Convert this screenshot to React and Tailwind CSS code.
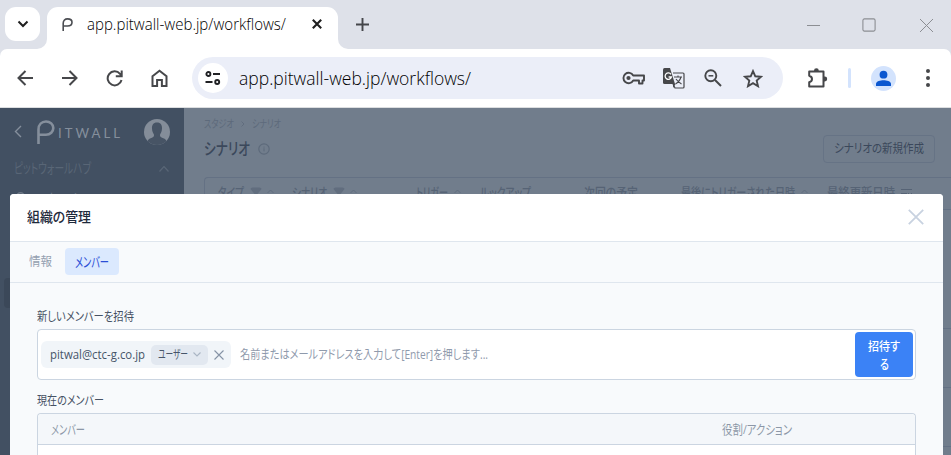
import React, { useLayoutEffect, useRef } from "react";

const JP = "font-['Open_Sans','Noto_Sans_CJK_JP',sans-serif] [font-feature-settings:'palt']";

// Text condensed or widened horizontally to a given width.
function Fit({ w, className = "", children }) {
  const ref = useRef(null);
  useLayoutEffect(() => {
    const el = ref.current;
    const natural = el.getBoundingClientRect().width;
    if (natural) el.style.transform = `scaleX(${w / natural})`;
  }, [w]);
  return (
    <span className={`block shrink-0 whitespace-nowrap ${className}`} style={{ width: w }}>
      <span ref={ref} className="inline-block origin-left">{children}</span>
    </span>
  );
}

function Icon({ w, h = w, box, className = "", sw = 2, children }) {
  return (
    <svg width={w} height={h} viewBox={box || `0 0 ${w} ${h}`} className={`block shrink-0 ${className}`} fill="none" stroke="currentColor" strokeWidth={sw}>
      {children}
    </svg>
  );
}

const Caret = ({ className }) => (
  <Icon w={7} h={5} sw={0.9} className={`text-[#5f6c7d] ${className}`}><path d="M.5 4 3.500 1l3 3" /></Icon>
);
const Funnel = ({ className }) => (
  <Icon w={12} h={9} className={`text-[#616d7e] ${className}`}><path fill="currentColor" stroke="none" d="M.5 2Q.5.500 2.500.500h7Q11.500.500 11.500 2L7.500 7v2h-3V7z" /></Icon>
);

function TabStrip() {
  return (
    <div className="flex h-[49px] items-start bg-[#dee1e9] text-[#1f1f1f]">
      <div className="ml-[5px] mt-[7px] flex h-[34px] w-[35px] items-center justify-center rounded-[11px] bg-white">
        <Icon w={12} h={8} sw={2}><path d="M1.500 1.500 6 6l4.500-4.500" /></Icon>
      </div>
      <div className="mt-[39px] ml-[-3px] h-[10px] w-[10px] bg-white">
        <div className="h-full w-full rounded-br-[10px] bg-[#dee1e9]" />
      </div>
      <div className="mt-[7px] flex h-[42px] w-[291px] items-center rounded-t-[11px] bg-white pb-[8px]">
        <Icon w={11} h={13} sw={1.600} className="ml-[15px] text-[#4b4d52]">
          <path d="M1.200 13V5.200C1.200 2.500 3 .9 5.500.9s4.500 1.300 4.500 3.400-1.700 3.700-4.500 3.700H1.200" />
        </Icon>
        <Fit w={199} className="ml-[14px] font-['Open_Sans',sans-serif] text-[15.500px] font-light leading-[24px] text-black">app.pitwall-web.jp/workflows/</Fit>
        <Icon w={10} sw={2.100} className="ml-[26px]"><path d="m.8.800 8.400 8.400M9.200.800.8 9.200" /></Icon>
      </div>
      <div className="mt-[39px] h-[10px] w-[10px] bg-white">
        <div className="h-full w-full rounded-bl-[10px] bg-[#dee1e9]" />
      </div>
      <Icon w={13} sw={1.900} className="ml-[8px] mt-[18px] text-[#44464a]"><path d="M6.500 0v13M0 6.500h13" /></Icon>
      <div className="ml-auto mr-[18px] mt-[18px] flex items-center text-[#8c8e93]">
        <Icon w={13} sw={1}><path d="M0 6.500h13" /></Icon>
        <Icon w={14} sw={1.100} className="ml-[42px]"><rect x=".9" y=".9" width="12.200" height="12.200" rx="1.500" /></Icon>
        <Icon w={13} sw={1} className="ml-[44px]"><path d="m0 0 13 13M13 0 0 13" /></Icon>
      </div>
    </div>
  );
}

function Toolbar() {
  return (
    <div className="bg-[#dee1e9]">
      <div className="flex h-[58px] items-center rounded-t-[7px] bg-white text-[#46474a]">
        <Icon w={16} sw={2} className="ml-[17px]"><path d="M16 8H2M8.500 1 1.500 8l7 7" /></Icon>
        <Icon w={16} sw={2} className="ml-[29px]"><path d="M0 8h14M7.500 1l7 7-7 7" /></Icon>
        <Icon w={17} sw={2} className="ml-[28px]"><path d="M15.500 10A7 7 0 1 1 14 3.800l1.500 1.700M15.700.5v5.800H9.800" /></Icon>
        <Icon w={17} h={18} sw={2} className="ml-[28px]"><path d="M1.500 7.200 8.500 1.800l7 5.400V17h-4.600v-6H6.100v6H1.500z" /></Icon>
        <div className="ml-[24px] flex h-[42px] w-[591px] shrink-0 items-center rounded-full bg-[#ebeef8]">
          <div className="ml-[6px] flex h-[30px] w-[30px] items-center justify-center rounded-full bg-white text-[#202124]">
            <Icon w={16} h={14} sw={1.900}>
              <circle cx="3.400" cy="3" r="2" /><path d="M8 3H15M.5 11H7.500" /><circle cx="12.200" cy="11" r="2" />
            </Icon>
          </div>
          <Fit w={232} className="ml-[11px] font-['Open_Sans',sans-serif] text-[18px] font-light leading-[24px] text-black">app.pitwall-web.jp/workflows/</Fit>
          <Icon w={23} h={14} sw={1.900} className="ml-[151px]">
            <path d="M11.200 4.500H22V9.500H20.500v3h-3.500v-3h-5.800A5.200 5.200 0 1 1 11.200 4.500Z" strokeLinejoin="round" />
            <circle cx="6.500" cy="7" r="2.100" fill="currentColor" stroke="none" />
          </Icon>
          <svg width="22" height="21" viewBox="0 0 22 21" className="ml-[18px] block shrink-0">
            <path d="M10 5h10q1 0 1 1v13q0 1-1 1H12l-2-4" fill="none" stroke="currentColor" strokeWidth="1.200" />
            <path d="M1.500 0H7l5 16H1.500Q0 16 0 14.500v-13Q0 0 1.500 0z" fill="currentColor" />
            <path d="M10 16h2.500L10 20z" fill="currentColor" />
            <path d="M8 6.300A3.200 3.200 0 1 0 8.400 9H5.600" fill="none" stroke="#fff" strokeWidth="1.300" />
            <path d="M11 9h8M15 7.500V9M18 9q-1 4-5.500 7M13 11q2 3 5.500 5" fill="none" stroke="currentColor" strokeWidth="1.100" />
          </svg>
          <Icon w={18} sw={1.900} className="ml-[19px]"><circle cx="6.800" cy="6.800" r="5.500" /><path d="m11 11 6 6" /><path d="M4.500 6.800h4.800" strokeWidth="1.500" /></Icon>
          <Icon w={20} h={19} sw={1.900} className="ml-[21px]"><path d="m10 2.100 2.300 5.200 5.700.5-4.300 3.800 1.300 5.600-5-3-5 3 1.300-5.600L2 7.800l5.700-.5z" /></Icon>
        </div>
        <Icon w={21} h={21} sw={2} className="ml-[24px]">
          <path d="M2.200 3.500H16.500V18.500H2.200V14.300Q5 13.500 5 11T2.200 7.700z" strokeLinejoin="round" />
          <path d="M7 3V2.700a2.400 2.400 0 0 1 4.800 0V3zM17 8.600h.8a2.400 2.400 0 0 1 0 4.800H17z" fill="currentColor" stroke="none" />
        </Icon>
        <div className="ml-[20px] h-[20px] w-[3px] rounded bg-[#d3e3fd]" />
        <svg width="25" height="25" viewBox="0 0 25 25" className="ml-[20px] block shrink-0">
          <circle cx="12.500" cy="12.500" r="12.500" fill="#d3e3fd" />
          <circle cx="12.500" cy="8.700" r="3.900" fill="#0b57d0" />
          <path d="M5 20v-2.200c0-2.500 4.500-3.600 7.500-3.600s7.500 1.100 7.500 3.600V20z" fill="#0b57d0" />
        </svg>
        <Icon w={4} h={18} className="ml-[30px]"><g fill="currentColor" stroke="none"><circle cx="2" cy="2" r="2" /><circle cx="2" cy="9" r="2" /><circle cx="2" cy="16" r="2" /></g></Icon>
      </div>
    </div>
  );
}

function Sidebar() {
  return (
    <div className="w-[184px] shrink-0 bg-[#425062]">
      <div className="flex h-[47px] items-center text-[#858f9c]">
        <Icon w={8} h={13} sw={1.400} className="ml-[14px]"><path d="M7 1 1.500 6.500 7 12" /></Icon>
        <Icon w={18} h={24} sw={2.600} className="ml-[15px]">
          <path d="M1.500 24V9.500C1.500 4.500 4.800 1.500 9 1.500s7.300 2.800 7.300 6.500-3 6.700-7.300 6.700H1.500" />
        </Icon>
        <Fit w={65} className="ml-[3px] mt-[3px] font-['Lato',sans-serif] text-[13px] leading-[14px] tracking-[3px]">ITWALL</Fit>
        <svg width="26" height="26" viewBox="0 0 26 26" className="ml-[21px] block shrink-0">
          <defs><clipPath id="avatar"><circle cx="13" cy="13" r="13" /></clipPath></defs>
          <g clipPath="url(#avatar)">
            <rect width="26" height="26" fill="#848d99" />
            <path d="M13 3.500c-3.800 0-5.200 2.700-5 6 .1 3.500 1.300 4.500 2 6.300.3 2-1 2.700-4 3.700C4.500 20 4 21 3.500 22.500V26h19v-3.500c-.5-1.500-1-2.500-2.500-3-3-1-4.300-1.700-4-3.700.7-1.800 1.900-2.800 2-6.300.2-3.300-1.200-6-5-6z" fill="#475465" />
          </g>
        </svg>
      </div>
      <div className="flex h-[27px] items-center text-[#596676]">
        <Fit w={77} className="ml-[14px] mt-[-2px] text-[14px] leading-[18px]">ピットウォールハブ</Fit>
        <Icon w={10} h={6} sw={1.200} className="ml-[68px]"><path d="m.5 5.500 4.500-5 4.500 5" /></Icon>
      </div>
      <div className="mt-[8px] flex h-[22px] items-start text-[#6d7886]">
        <Icon w={9} h={9} sw={1.500} className="ml-[16px] mt-[2px]"><circle cx="4.500" cy="4.500" r="3.700" /></Icon>
        <span className="ml-[20px] mt-[-1px] text-[13px] leading-[18px]">ホーム</span>
      </div>
      <div className="ml-[4px] mt-[66px] h-[30px] w-[172px] rounded bg-[#3b4859]" />
    </div>
  );
}

function Scenarios() {
  return (
    <div className="min-w-0 flex-1 overflow-hidden pl-[20px]">
      <div className="flex h-[32px] items-center text-[11px] leading-[14px] text-[#5d6a7b]">
        <Fit w={30}>スタジオ</Fit>
        <Icon w={4} h={6} sw={0.800} className="ml-[7px]"><path d="m.5.500 2.500 2.500L.5 5.500" /></Icon>
        <Fit w={29} className="ml-[7px]">シナリオ</Fit>
      </div>
      <div className="flex h-[17px] items-center">
        <Fit w={46} className="text-[16.500px] font-medium leading-[20px] text-[#3b485b]">シナリオ</Fit>
        <Icon w={12} sw={1.200} className="ml-[8px] text-[#5d6a7b]"><circle cx="6" cy="6" r="5.200" /><path d="M6 5.200v3.200M6 3.600v1" strokeWidth="1" /></Icon>
        <div className="ml-auto mr-[16px] flex h-[28px] w-[112px] items-center justify-center rounded-[4px] border border-[#667385] pt-px text-[#3b485b]">
          <Fit w={90} className="text-[12.500px] leading-[18px]">シナリオの新規作成</Fit>
        </div>
      </div>
      <div className="mt-[20px] h-[280px] rounded-tl-[4px] border-l border-t border-[#647184]">
        <div className="flex h-[32px] items-center border-b border-[#647184] pb-[4px] pl-[13px] text-[13px] font-medium leading-[18px] text-[#566375]">
          <Fit w={26}>タイプ</Fit><Funnel className="ml-[6px]" /><Caret className="ml-[5px]" />
          <Fit w={35} className="ml-[18px]">シナリオ</Fit><Funnel className="ml-[6px]" /><Caret className="ml-[5px]" />
          <Fit w={32} className="ml-[59px]">トリガー</Fit><Caret className="ml-[6px]" />
          <Fit w={51} className="ml-[19px]">ルックアップ</Fit>
          <Fit w={54} className="ml-[53px]">次回の予定</Fit>
          <Fit w={114} className="ml-[43px]">最後にトリガーされた日時</Fit><Caret className="ml-[6px]" />
          <Fit w={68} className="ml-[19px]">最終更新日時</Fit>
          <Icon w={12} h={8} sw={1} className="ml-[6px]"><path d="M0 1.500h11M0 5.500h6M7 5l2 2 2-2" /></Icon>
        </div>
        <div className="h-[119px] border-b border-[#647184]" />
        <div className="h-[59px] border-b border-[#647184]" />
        <div className="h-[59px] border-b border-[#647184]" />
      </div>
    </div>
  );
}

function MemberDialog() {
  return (
    <div className="absolute left-[10px] right-[8px] top-[86px] h-[270px] rounded-t-[4px] bg-[#f8fafc]">
      <div className="flex h-[48px] items-center justify-between rounded-t-[4px] border-b border-[#dfe6ee] bg-white pb-[2px] pl-[17px] pr-[19px]">
        <Fit w={64} className="text-[13.500px] font-medium leading-[20px] text-[#1e293b]">組織の管理</Fit>
        <Icon w={16} sw={1.800} className="text-[#c8d2e0]"><path d="m.8.800 14.400 14.400M15.200.800.8 15.200" /></Icon>
      </div>
      <div className="flex h-[41px] items-center border-b border-[#dfe6ee] pb-px pl-[19px] text-[12px] leading-[18px]">
        <Fit w={23} className="text-[#94a0b0]">情報</Fit>
        <div className="ml-[13px] flex h-[27px] w-[54px] items-center justify-center rounded-[4px] bg-[#dbe9fe] text-[#2b4ed6]">
          <Fit w={34} className="text-[14px]">メンバー</Fit>
        </div>
      </div>
      <div className="pl-[27px] pr-[27px] pt-[24px]">
        <Fit w={97} className="text-[12.500px] leading-[20px] text-[#475264]">新しいメンバーを招待</Fit>
        <div className="mt-[2px] flex h-[51px] items-center rounded-[4px] border border-[#cbd5e1] bg-white pl-[3px] pr-[2px]">
          <div className="flex h-[27px] w-[190px] shrink-0 items-center rounded-[6px] bg-[#f1f5f9]">
            <Fit w={95} className="ml-[9px] text-[12.500px] leading-[18px] text-[#475569]">pitwal@ctc-g.co.jp</Fit>
            <div className="ml-[6px] flex h-[20px] w-[57px] items-center rounded-[5px] bg-[#e2e8f0] pl-[7px]">
              <Fit w={30} className="text-[12px] leading-[16px] text-[#475569]">ユーザー</Fit>
              <Icon w={8} h={5} sw={1.100} className="ml-[5px] text-[#a9b5c4]"><path d="m.5.500 3.500 3.500L7.500.500" /></Icon>
            </div>
            <Icon w={10} sw={1.100} className="ml-[6px] text-[#8693a6]"><path d="m.5.500 9 9M9.500.500l-9 9" /></Icon>
          </div>
          <Fit w={248} className="ml-[9px] text-[12.500px] leading-[18px] text-[#8f9aac]">名前またはメールアドレスを入力して[Enter]を押します...</Fit>
          <button className="ml-auto flex h-[45px] w-[58px] flex-col items-center justify-center rounded-[4px] bg-[#3b82f6] pt-[2px] text-[12px] font-medium leading-[18px] text-white">
            <Fit w={32}>招待す</Fit>
            <Fit w={9}>る</Fit>
          </button>
        </div>
        <Fit w={67} className="mt-[11px] text-[12.500px] leading-[20px] text-[#475264]">現在のメンバー</Fit>
        <div className="mt-[2px] h-[43px] rounded-t-[4px] border border-b-0 border-[#cbd5e1] bg-white">
          <div className="flex h-[31px] items-center rounded-t-[4px] border-b border-[#cbd5e1] bg-[#f4f7fa] text-[13px] leading-[18px] text-[#8c97a7]">
            <Fit w={34} className="ml-[13px] mt-[-1px]">メンバー</Fit>
            <Fit w={70} className="ml-[637px] mt-[-1px]">役割/アクション</Fit>
          </div>
        </div>
      </div>
    </div>
  );
}

export default function App() {
  return (
    <div className={`h-[455px] w-[951px] overflow-hidden ${JP}`}>
      <TabStrip />
      <Toolbar />
      <div className="h-px bg-[#dcdee0]" />
      <div className="relative flex h-[347px] overflow-hidden bg-[#717d8c]">
        <Sidebar />
        <Scenarios />
        <MemberDialog />
      </div>
    </div>
  );
}
